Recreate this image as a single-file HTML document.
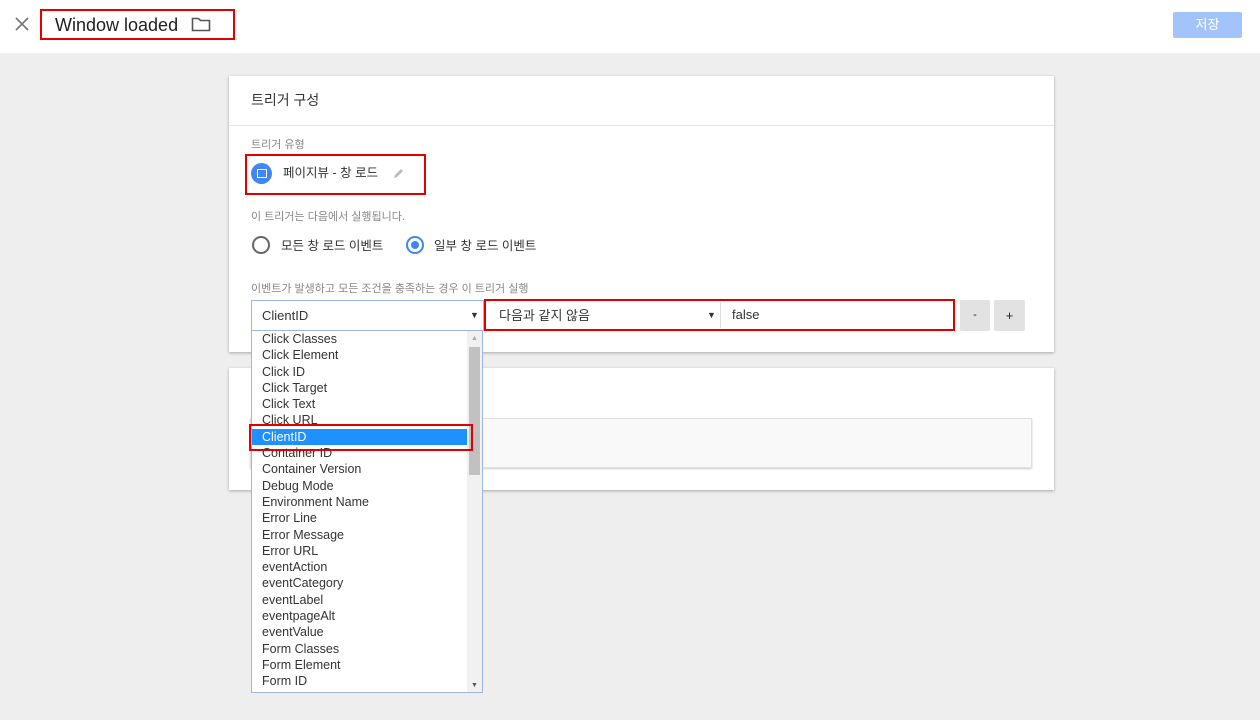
<!DOCTYPE html>
<html><head><meta charset="utf-8"><style>
*{margin:0;padding:0;box-sizing:border-box}
body{width:1260px;height:720px;background:#eeeeee;font-family:"Liberation Sans","Noto Sans CJK KR",sans-serif;position:relative;overflow:hidden;color:#212121}
.abs{position:absolute;line-height:1.2}
.top{left:0;top:0;width:1260px;height:53px;background:#fff}
.card{background:#fff;box-shadow:0 1px 3px rgba(0,0,0,.3)}
.red{border:2.5px solid #e00000}
.lbl{font-size:11px;color:#888}
.list div{height:16.3px;line-height:16.3px;font-size:12.5px;padding-left:10px;color:#333}
</style></head><body>
<div class="abs top"></div>
<svg class="abs" style="left:15px;top:17px" width="14" height="14" viewBox="0 0 14 14"><path d="M1 1L13 13M13 1L1 13" stroke="#777" stroke-width="1.6"/></svg>
<div class="abs red" style="left:40px;top:9px;width:195px;height:31px"></div>
<div class="abs" style="left:55px;top:14px;font-size:18px;color:#212121;line-height:22px">Window loaded</div>
<svg class="abs" style="left:191px;top:16px" width="20" height="17" viewBox="0 0 20 17"><path d="M1.5 2.5h6l2 2h9v10h-17z" fill="none" stroke="#555" stroke-width="1.6"/></svg>
<div class="abs" style="left:1173px;top:12px;width:69px;height:26px;background:#a3c4fb;border-radius:2px;color:#fff;font-size:13px;text-align:center;line-height:26px">저장</div>

<div class="abs card" style="left:229px;top:76px;width:825px;height:276px"></div>
<div class="abs" style="left:229px;top:125px;width:825px;height:1px;background:#e4e4e4"></div>
<div class="abs" style="left:251px;top:92px;font-size:14px;color:#333">트리거 구성</div>
<div class="abs lbl" style="left:251px;top:139px">트리거 유형</div>
<div class="abs red" style="left:245px;top:154px;width:181px;height:41px"></div>
<div class="abs" style="left:251px;top:163px;width:21px;height:21px;border-radius:50%;background:#4285f4"></div>
<div class="abs" style="left:256.5px;top:169px;width:10px;height:9px;border:1.6px solid #fff"></div>
<div class="abs" style="left:283px;top:166px;font-size:12.5px;color:#333">페이지뷰 - 창 로드</div>
<svg class="abs" style="left:392px;top:166px" width="14" height="14" viewBox="0 0 14 14"><path d="M2 12l1-3 6-6 2 2-6 6z" fill="#bbb"/></svg>
<div class="abs lbl" style="left:251px;top:211px">이 트리거는 다음에서 실행됩니다.</div>
<div class="abs" style="left:252px;top:236px;width:18px;height:18px;border-radius:50%;border:2px solid #666"></div>
<div class="abs" style="left:281px;top:239px;font-size:12.5px;color:#333">모든 창 로드 이벤트</div>
<div class="abs" style="left:406px;top:236px;width:18px;height:18px;border-radius:50%;border:2px solid #4285f4"></div>
<div class="abs" style="left:411px;top:241px;width:8px;height:8px;border-radius:50%;background:#4285f4"></div>
<div class="abs" style="left:434px;top:239px;font-size:12.5px;color:#333">일부 창 로드 이벤트</div>
<div class="abs lbl" style="left:251px;top:283px">이벤트가 발생하고 모든 조건을 충족하는 경우 이 트리거 실행</div>

<div class="abs" style="left:251px;top:300px;width:233px;height:31px;border:1px solid #9db5e8;background:#fff"></div>
<div class="abs" style="left:262px;top:308px;font-size:13px;color:#333">ClientID</div>
<div class="abs" style="left:470px;top:310px;font-size:9px;color:#333">▼</div>
<div class="abs red" style="left:484px;top:299px;width:471px;height:32px"></div>
<div class="abs" style="left:720px;top:302px;width:1px;height:26px;background:#ddd"></div>
<div class="abs" style="left:499px;top:308px;font-size:13px;color:#333">다음과 같지 않음</div>
<div class="abs" style="left:707px;top:310px;font-size:9px;color:#333">▼</div>
<div class="abs" style="left:732px;top:307px;font-size:13px;color:#333">false</div>
<div class="abs" style="left:960px;top:300px;width:30px;height:31px;background:#e2e2e2;border-radius:2px;font-size:11px;text-align:center;line-height:31px">-</div>
<div class="abs" style="left:994px;top:300px;width:31px;height:31px;background:#e2e2e2;border-radius:2px;font-size:13px;text-align:center;line-height:31px">+</div>

<div class="abs card" style="left:229px;top:368px;width:825px;height:122px"></div>
<div class="abs" style="left:250px;top:418px;width:782px;height:50px;background:#f9f9f9;border:1px solid #e0e0e0;box-shadow:0 1px 2px rgba(0,0,0,.2)"></div>

<div class="abs list" style="left:251px;top:331px;width:232px;height:362px;background:#fff;border:1px solid #9db5e8;border-top:none;overflow:hidden">
<div>Click Classes</div><div>Click Element</div><div>Click ID</div><div>Click Target</div><div>Click Text</div><div>Click URL</div><div style="background:#1e90ff;color:#fff;margin-right:15px">ClientID</div><div>Container ID</div><div>Container Version</div><div>Debug Mode</div><div>Environment Name</div><div>Error Line</div><div>Error Message</div><div>Error URL</div><div>eventAction</div><div>eventCategory</div><div>eventLabel</div><div>eventpageAlt</div><div>eventValue</div><div>Form Classes</div><div>Form Element</div><div>Form ID</div><div>Form Text</div>
</div>
<div class="abs" style="left:467px;top:331px;width:15px;height:361px;background:#f1f1f1"></div>
<div class="abs" style="left:469px;top:347px;width:11px;height:128px;background:#c1c1c1"></div>
<div class="abs" style="left:471px;top:335px;font-size:7px;color:#aaa">▲</div>
<div class="abs" style="left:471px;top:682px;font-size:7px;color:#555">▼</div>
<div class="abs red" style="left:249px;top:424px;width:224px;height:27px"></div>
</body></html>
